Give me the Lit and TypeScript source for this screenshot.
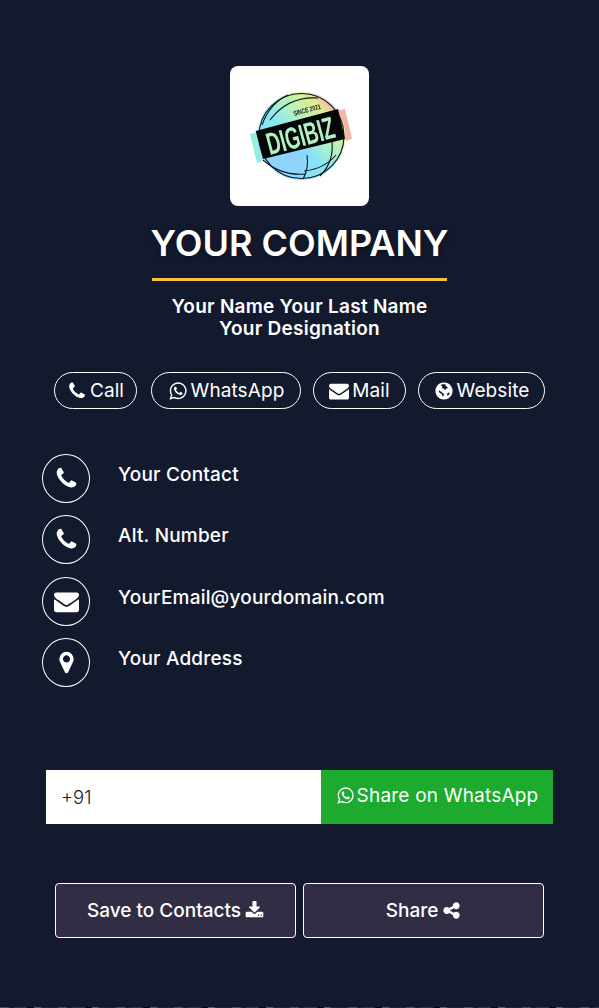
import { LitElement, html, css, svg } from "lit";
import { customElement } from "lit/decorators.js";

const P = {
  phone: "M1600 1240q0 27-10 70.5t-21 68.5q-21 50-122 106-94 51-186 51-27 0-53-3.5t-57.5-12.5-47-14.5-55.5-20.5-49-18q-98-35-175-83-127-79-264-216t-216-264q-48-77-83-175-3-9-18-49t-20.5-55.5-14.5-47-12.5-57.5-3.5-53q0-92 51-186 56-101 106-122 25-11 68.5-21t70.5-10q14 0 21 3 18 6 53 76 11 19 30 54t35 63.5 31 53.5q3 4 17.5 25t21.5 35.5 7 28.5q0 20-28.5 50t-62 55-62 53-28.5 46q0 9 5 22.5t8.5 20.5 14 24 11.5 19q76 137 174 235t235 174q2 1 19 11.5t24 14 20.5 8.5 22.5 5q18 0 46-28.5t53-62 55-62 50-28.5q14 0 28.5 7t35.5 21.5 25 17.5q25 15 53.5 31t63.5 35 54 30q70 35 76 53 3 7 3 21z",
  mail: "M1792 710v794q0 66-47 113t-113 47h-1472q-66 0-113-47t-47-113v-794q44 49 101 87 362 246 497 345 57 42 92.5 65.5t94.5 48 110 24.5h2q51 0 110-24.5t94.5-48 92.5-65.5q170-123 498-345 57-39 100-87zm0-294q0 79-49 151t-122 123q-376 261-468 325-10 7-42.5 30.5t-54 38-52 32.5-57.5 27-50 9h-2q-23 0-50-9t-57.5-27-52-32.5-54-38-42.5-30.5q-91-64-262-182.5t-205-142.5q-62-42-117-115.5t-55-136.5q0-78 41.5-130t118.5-52h1472q65 0 112.5 47t47.5 113z",
  marker: "M768 640q0-106-75-181t-181-75-181 75-75 181 75 181 181 75 181-75 75-181zm256 0q0 109-33 179l-364 774q-16 33-47.5 52t-67.5 19-67.5-19-46.5-52l-365-774q-33-70-33-179 0-212 150-362t362-150 362 150 150 362z",
  share: "M1344 1024q133 0 226.5 93.5t93.5 226.5-93.5 226.5-226.5 93.5-226.5-93.5-93.5-226.5q0-12 2-34l-360-180q-92 86-218 86-133 0-226.5-93.5t-93.5-226.5 93.5-226.5 226.5-93.5q126 0 218 86l360-180q-2-22-2-34 0-133 93.5-226.5t226.5-93.5 226.5 93.5 93.5 226.5-93.5 226.5-226.5 93.5q-126 0-218-86l-360 180q2 22 2 34t-2 34l360 180q92-86 218-86z",
  download: "M1344 1344q0-26-19-45t-45-19-45 19-19 45 19 45 45 19 45-19 19-45zm256 0q0-26-19-45t-45-19-45 19-19 45 19 45 45 19 45-19 19-45zm128-224v320q0 40-28 68t-68 28h-1472q-40 0-68-28t-28-68v-320q0-40 28-68t68-28h465l135 136q58 56 136 56t136-56l136-136h464q40 0 68 28t28 68zm-325-569q17 41-14 70l-448 448q-18 19-45 19t-45-19l-448-448q-31-29-14-70 17-39 59-39h256v-448q0-26 19-45t45-19h256q26 0 45 19t19 45v448h256q42 0 59 39z",
  globe: "M896 128q209 0 385.5 103t279.5 279.5 103 385.5-103 385.5-279.5 279.5-385.5 103-385.5-103-279.5-279.5-103-385.5 103-385.5 279.5-279.5 385.5-103zM800 290q-110 20-200 80l40 60 70 10 40 70-60 70 40 70 100 10 60 90 90 40 90-30 40-90 70-30 60-60-60-70-100-30-60-90 50-60-120-40zm-320 560l-70 30 50 120 100 90 90 20 70 110 40 140 70 20 40-80 20-120-50-90-90-40-90-70-90-60zm840 170l-110 60-40 110 30 90-50 70q120-40 210-130l60-70-40-80z",
  whatsapp: "M1113 974q13 0 97.5 44t89.5 53q2 5 2 15 0 33-17 76-16 39-71 65.5t-102 26.5q-57 0-190-62-98-45-170-118t-148-185q-72-107-71-194v-8q3-91 74-158 24-22 52-22 6 0 18 1.5t19 1.5q19 0 26.5 6.5t15.5 27.5q8 20 33 88t25 75q0 21-34.5 57.5t-34.5 46.5q0 7 5 15 34 73 102 137 56 53 151 101 12 7 22 7 15 0 54-48.5t52-48.5zm-203 530q127 0 243.5-50t200.5-134 134-200.5 50-243.5-50-243.5-134-200.5-200.5-134-243.5-50-243.5 50-200.5 134-134 200.5-50 243.5q0 203 120 368l-79 233 242-77q158 104 345 104zm0-1382q153 0 292.5 60t240.5 161 161 240.5 60 292.5-60 292.5-161 240.5-240.5 161-292.5 60q-195 0-365-94l-417 134 136-405q-108-178-108-389 0-153 60-292.5t161-240.5 240.5-161 292.5-60z",
};
type K = keyof typeof P;
const icon = (k: K, cls = "i") => html`<svg class=${cls} viewBox=${k === "marker" ? "0 0 1024 1792" : "0 0 1792 1792"} fill="currentColor" fill-rule="evenodd"><path d=${P[k]}></path></svg>`;

const logo = html`<svg class="logo" viewBox="245 85 110 100">
  <defs>
    <linearGradient id="g" x1="0.15" y1="0.85" x2="0.85" y2="0.1">
      <stop offset="0" stop-color="#8fe0ff"/><stop offset=".4" stop-color="#86e8f4"/>
      <stop offset=".62" stop-color="#b4f2c0"/><stop offset=".85" stop-color="#dcef8c"/><stop offset="1" stop-color="#f6a6cc"/>
    </linearGradient>
    <radialGradient id="b" cx=".35" cy=".75" r=".4">
      <stop offset="0" stop-color="#8fc4ff" stop-opacity=".7"/><stop offset="1" stop-color="#8fc4ff" stop-opacity="0"/>
    </radialGradient>
  </defs>
  <polygon points="250,133 256.500,131.500 263.500,160 257,162" fill="#97ebe6"/>
  <polygon points="338,109.500 345,108 352,138 345,140" fill="#f5b3a6"/>
  <circle cx="301.500" cy="135" r="44" fill="url(#g)"/>
  <circle cx="301.500" cy="135" r="44" fill="url(#b)"/>
  ${svg`<g fill="none" stroke="#11131f" stroke-width="1.100">
    <circle cx="301.500" cy="135" r="42.500"/>
    <path d="M288 94 q-18 8 -26 30"/><path d="M318 97 q-30 -2 -48 22"/>
    <path d="M263 159 q18 16 42 14"/><path d="M303 178 q6 -10 4 -24"/>
    <path d="M320 175 q14 -14 12 -34"/><path d="M304 170 q20 -2 32 -16"/>
  </g>`}
  <polygon points="255.700,130 338,108 345,138 263,158" fill="#060606"/>
  <g transform="rotate(-15 300 133)">
    <text x="0" y="0" transform="translate(300 145.500) scale(.61 1)" text-anchor="middle" class="lt">DIGIBIZ</text>
    <text x="0" y="0" transform="translate(313 114) scale(.72 1)" text-anchor="middle" class="ls">SINCE 2021</text>
  </g>
</svg>`;

@customElement("app-root")
export class AppRoot extends LitElement {
  static styles = css`
    :host { display: block; width: 599px; height: 1008px; overflow: hidden; background: #131a2e; color: #fff; font-family: Inter, "Liberation Sans", sans-serif; }
    .page { position: relative; height: 1008px; display: flex; flex-direction: column; align-items: center; padding-top: 66px; box-sizing: border-box; }
    .card { width: 139px; height: 140px; background: #fff; border-radius: 8px; display: flex; align-items: center; justify-content: center; }
    .logo { width: 110px; height: 100px; filter: blur(0.35px); overflow: visible; }
    .lt { font: 700 31px "Liberation Sans", sans-serif; fill: #aef2c4; }
    .ls { font: 700 7px "Liberation Sans", sans-serif; fill: #1a1a1a; }
    h1 { margin: 15px 0 0; font-size: 36px; line-height: 44px; font-weight: 600; text-shadow: 0 2px 6px rgba(0,0,0,.35); }
    .rule { width: 295px; height: 3px; background: #fdbf3e; margin-top: 13px; }
    .who { margin-top: 15px; font-size: 19px; line-height: 22px; font-weight: 600; text-align: center; letter-spacing: .25px; }
    .pills { display: flex; margin-top: 32px; }
    .pill { height: 37px; box-sizing: border-box; border: 1px solid #fff; border-radius: 19px; display: flex; align-items: center; justify-content: center; gap: 3px; font-size: 19px; letter-spacing: .1px; margin-left: 12px; }
    .pill:nth-child(1) { width: 83px; margin: 0 2px 0 0; }
    .pill:nth-child(2) { width: 150px; }
    .pill:nth-child(3) { width: 93px; }
    .pill:nth-child(4) { width: 127px; }
    .i { width: 20px; height: 20px; flex: none; }
    .list { align-self: stretch; margin: 45px 0 0 42px; display: flex; flex-direction: column; gap: 12px; }
    .row { display: flex; gap: 28px; height: 49.3px; }
    .circle { width: 48px; height: 49px; box-sizing: border-box; border: 1px solid #fff; border-radius: 50%; display: flex; align-items: center; justify-content: center; flex: none; }
    .circle .i { width: 25px; height: 25px; }
    .txt { font-size: 19px; line-height: 22px; font-weight: 500; margin-top: 10px; letter-spacing: .2px; }
    .send { display: flex; width: 507px; height: 54px; margin-top: 83px; }
    .input { width: 275px; background: #fff; color: #222; display: flex; align-items: center; padding-left: 15px; box-sizing: border-box; font-size: 18.5px; font-weight: 300; }
    .wa { flex: 1; background: #1cab2e; display: flex; align-items: center; justify-content: center; gap: 2px; font-size: 19px; letter-spacing: .2px; padding-bottom: 3px; box-sizing: border-box; }
    .wa .i { width: 19px; height: 19px; }
    .actions { display: flex; gap: 7px; margin-top: 59px; }
    .btn { width: 241px; height: 55px; box-sizing: border-box; background: #302d44; border: 1px solid #fff; border-radius: 4px; display: flex; align-items: center; justify-content: center; gap: 4px; font-size: 19px; font-weight: 500; }
    .btn .i { width: 19px; height: 19px; }
    .noise { position: absolute; left: 0; right: 0; bottom: 0; height: 1px; background: repeating-linear-gradient(90deg, #4a4d56 0 9px, #1c1f2a 9px 14px, #33363f 14px 27px, #08090c 27px 34px, #5a5c64 34px 41px, #23262f 41px 58px); }
  `;

  render() {
    const pills: [K, string][] = [["phone", "Call"], ["whatsapp", "WhatsApp"], ["mail", "Mail"], ["globe", "Website"]];
    const rows: [K, string][] = [["phone", "Your Contact"], ["phone", "Alt. Number"], ["mail", "YourEmail@yourdomain.com"], ["marker", "Your Address"]];
    return html`<div class="page">
      <div class="card">${logo}</div>
      <h1>YOUR COMPANY</h1>
      <div class="rule"></div>
      <div class="who">Your Name Your Last Name<br />Your Designation</div>
      <div class="pills">${pills.map(([k, t]) => html`<div class="pill">${icon(k)}${t}</div>`)}</div>
      <div class="list">${rows.map(([k, t]) => html`<div class="row"><div class="circle">${icon(k)}</div><div class="txt">${t}</div></div>`)}</div>
      <div class="send"><div class="input">+91</div><div class="wa">${icon("whatsapp")}Share on WhatsApp</div></div>
      <div class="actions">
        <div class="btn">Save to Contacts ${icon("download")}</div>
        <div class="btn">Share ${icon("share")}</div>
      </div>
      <div class="noise"></div>
    </div>`;
  }
}
